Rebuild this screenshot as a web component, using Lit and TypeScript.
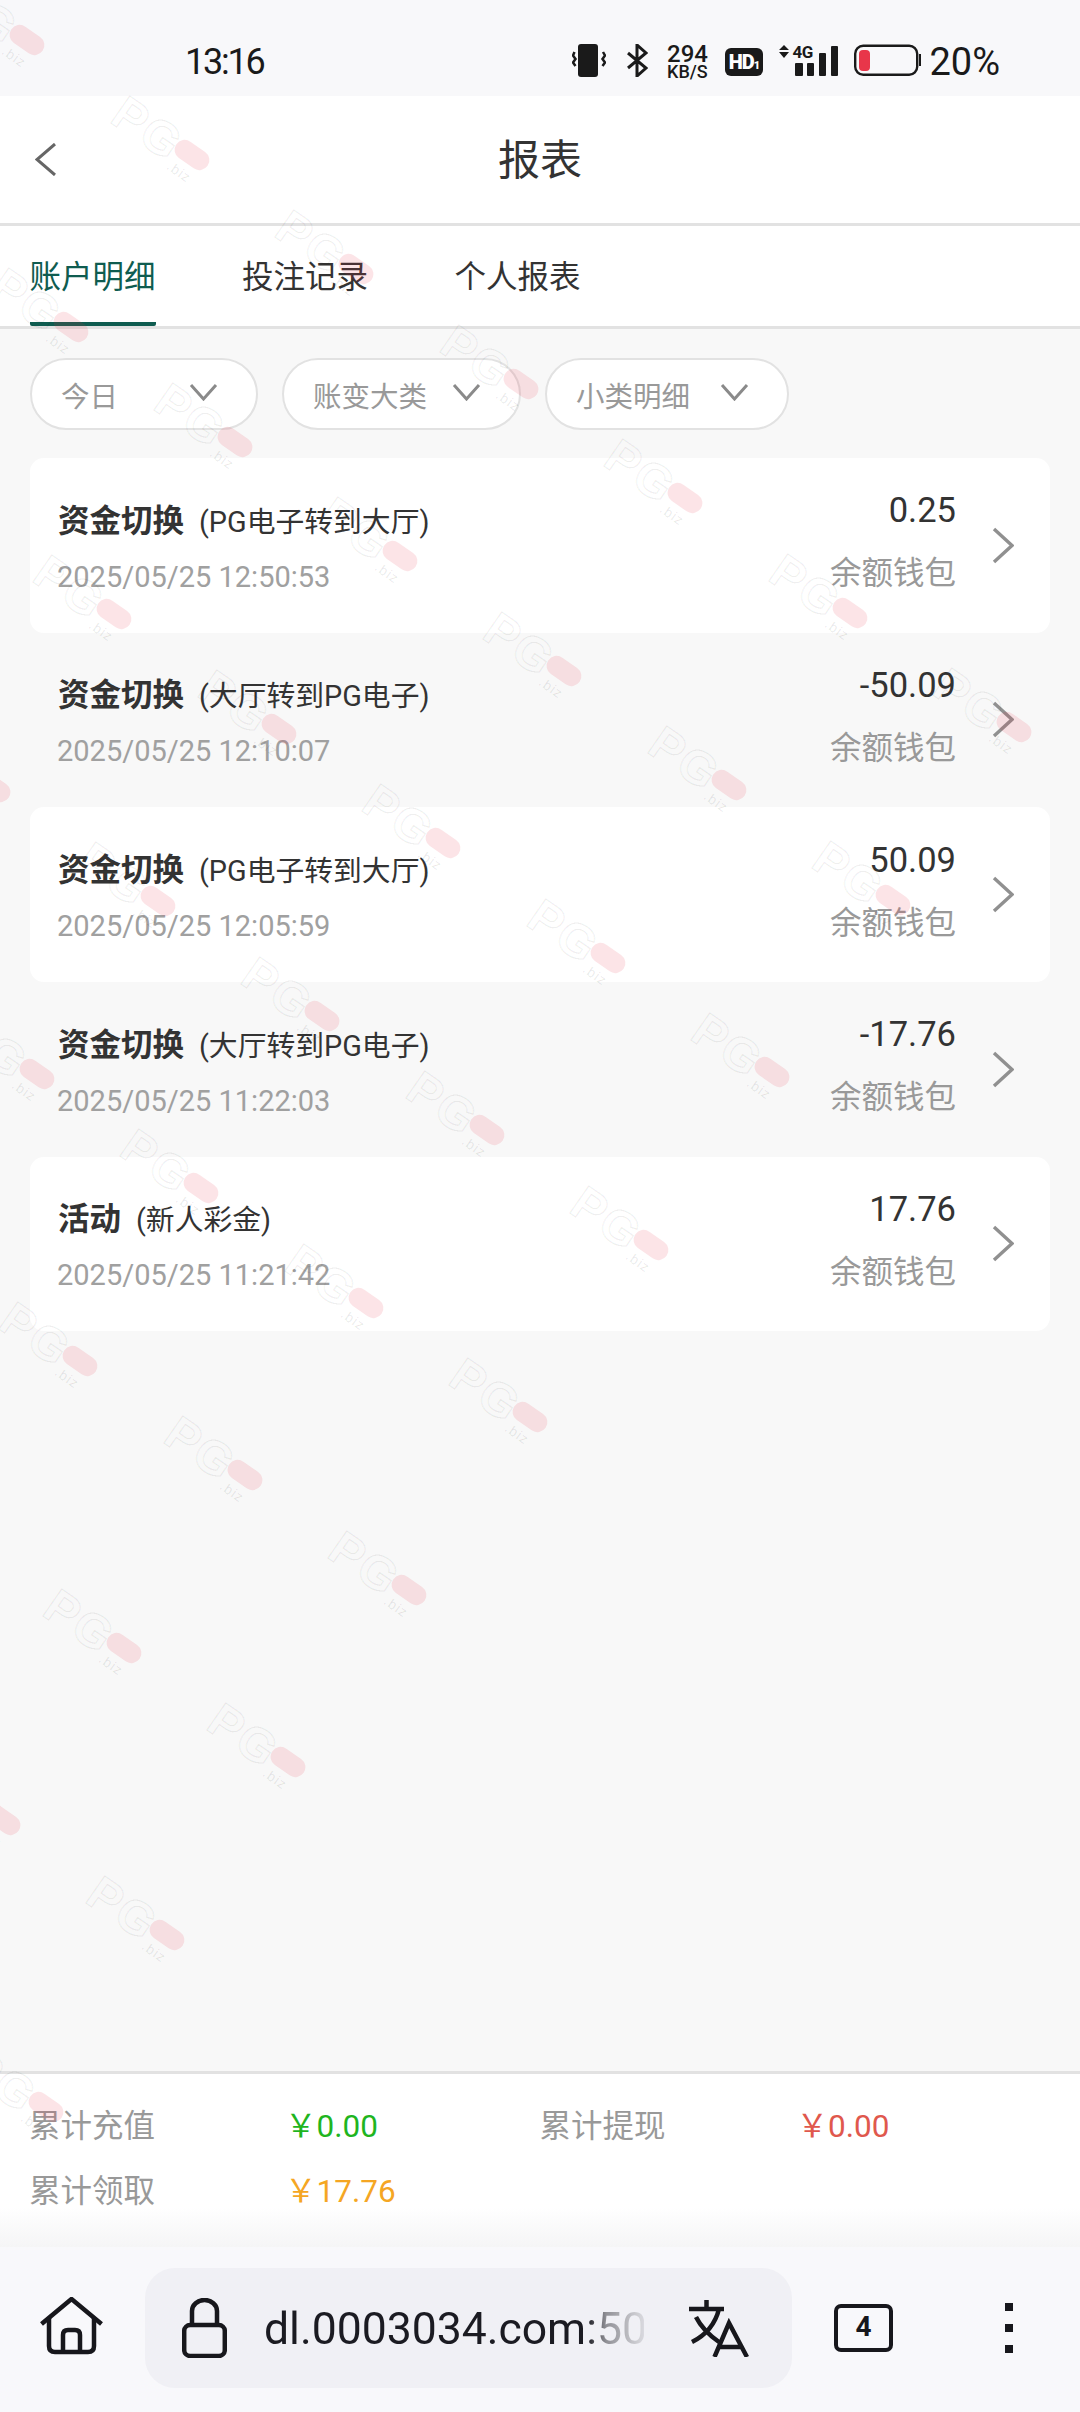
import { LitElement, css, html, svg } from 'lit'
import { customElement } from 'lit/decorators.js'

const records = [
  { title: '资金切换', sub: '(PG电子转到大厅)', time: '2025/05/25 12:50:53', amount: '0.25', card: true },
  { title: '资金切换', sub: '(大厅转到PG电子)', time: '2025/05/25 12:10:07', amount: '-50.09', card: false },
  { title: '资金切换', sub: '(PG电子转到大厅)', time: '2025/05/25 12:05:59', amount: '50.09', card: true },
  { title: '资金切换', sub: '(大厅转到PG电子)', time: '2025/05/25 11:22:03', amount: '-17.76', card: false },
  { title: '活动', sub: '(新人彩金)', time: '2025/05/25 11:21:42', amount: '17.76', card: true },
]

// watermark lattice: [row, first column, last column]
const marks: [number, number, number][] = [
  [0, 0, 6], [1, 0, 5], [2, 0, 4], [3, -1, 3], [4, -1, 2], [5, -1, 1], [6, -1, 0], [7, -2, -1], [8, -2, -2],
]
const markPoints = marks.flatMap(([j, from, to]) => {
  const out: { x: number; y: number }[] = []
  for (let i = from; i <= to; i++) out.push({ x: 27 + i * 164.5 + j * 43.5, y: 40 + i * 114.5 + j * 287 })
  return out
})

const chevronDown = svg`<path d="M2 2 L14.5 16 L27 2" fill="none" stroke="#8a8a8a" stroke-width="3"/>`
const chevronRight = svg`<path d="M2 2 L20 18.5 L2 35" fill="none" stroke="#909090" stroke-width="3.4"/>`

@customElement('app-root')
export class AppRoot extends LitElement {
  static styles = css`
    :host {
      display: flex;
      flex-direction: column;
      position: relative;
      width: 1080px;
      height: 2412px;
      overflow: hidden;
      background: #f8f8f8;
      font-family: Roboto, 'Noto Sans CJK SC', sans-serif;
      color: #333;
    }
    svg { display: block; flex: none; }

    .status {
      height: 96px;
      box-sizing: border-box;
      padding: 44px 80px 0 185px;
      display: flex;
      align-items: flex-start;
      background: #f8f8fa;
      color: #1a1a1a;
    }
    .time { font-size: 36px; line-height: 36px; letter-spacing: -2.2px; }
    .icons { margin-left: auto; display: flex; align-items: flex-start; }
    .vib { margin-right: 21px; }
    .bt { margin-right: 18px; }
    .net { width: 42px; margin-right: 17px; text-align: center; font-weight: 500; }
    .net div:first-child { font-size: 24px; line-height: 20px; }
    .net div:last-child { font-size: 18px; line-height: 15px; }
    .hd {
      width: 38px;
      height: 28px;
      margin: 4px 16px 0 0;
      border-radius: 6px;
      background: #1a1a1a;
      color: #fff;
      font-size: 20px;
      font-weight: 900;
      line-height: 28px;
      letter-spacing: -1px;
      text-align: center;
    }
    .hd small { font-size: 11px; letter-spacing: 0; }
    .signal { position: relative; width: 59px; height: 33px; margin-right: 16px; }
    .signal span {
      position: absolute;
      left: 13px;
      top: 0;
      font-size: 17px;
      line-height: 16px;
      font-weight: 700;
      letter-spacing: -0.5px;
    }
    .batt { margin-right: 8px; }
    .pct { font-size: 38px; line-height: 36px; }

    .head {
      height: 127px;
      box-sizing: content-box;
      display: flex;
      align-items: center;
      justify-content: center;
      position: relative;
      background: #fff;
      border-bottom: 3px solid #e2e2e2;
      font-size: 42px;
      line-height: 60px;
      color: #333;
    }
    .head span { margin-top: 2px; }
    .back { position: absolute; left: 35px; top: 47px; }

    .tabs {
      height: 100px;
      display: flex;
      gap: 86.5px;
      padding: 0 29.5px;
      background: #fff;
      border-bottom: 3px solid #e2e2e2;
      font-size: 31.5px;
    }
    .tab { line-height: 103px; height: 100px; box-sizing: border-box; color: #333; }
    .tab.on { color: #0f5c50; border-bottom: 4px solid #0f5c50; border-radius: 0 0 2px 2px; }

    main { flex: 1; padding: 29px 30px 0; min-height: 0; }
    .filters {
      display: grid;
      grid-template-columns: 228px 239px 244px;
      column-gap: 24px;
      margin-bottom: 28px;
    }
    .pill {
      height: 72px;
      box-sizing: border-box;
      padding: 0 38px 0 29px;
      display: flex;
      align-items: center;
      justify-content: space-between;
      background: #fff;
      border: 2.5px solid #e2e2e2;
      border-radius: 36px;
      font-size: 28.5px;
      color: #999;
    }
    .pill svg { margin-top: -4px; }
    .row {
      height: 174.67px;
      box-sizing: border-box;
      padding: 0 36px 0 28px;
      display: flex;
      align-items: center;
      border-radius: 14px;
    }
    .row.card { background: #fff; }
    .info { flex: 1; padding-top: 8px; }
    .line { display: flex; align-items: center; gap: 15px; line-height: 40px; }
    .name { font-size: 31.5px; font-weight: 700; color: #333; }
    .sub { font-size: 28.8px; color: #333; }
    .date { margin-top: 15px; font-size: 29px; line-height: 40px; color: #a0a0a0; margin-left: -1px; }
    .side { text-align: right; padding-bottom: 6px; margin-right: 36px; }
    .amount { font-size: 34.5px; line-height: 40px; color: #333; }
    .wallet { margin-top: 24px; font-size: 31.5px; line-height: 40px; color: #999; }

    .totals {
      height: 176px;
      box-sizing: border-box;
      padding: 33px 0 0 29px;
      display: grid;
      grid-template-columns: 256px 254.5px 257px 1fr;
      grid-auto-rows: 65px;
      align-content: start;
      border-top: 3px solid #e2e2e2;
      background: linear-gradient(#fff 77%, #f5f5f6 100%);
      font-size: 31.5px;
      line-height: 40px;
      color: #999;
    }
    .val { font-size: 31.5px; }
    .green { color: #1fb51f; }
    .red { color: #e0584d; }
    .amber { color: #f5a623; }

    .bar {
      height: 165px;
      box-sizing: border-box;
      padding-bottom: 3px;
      position: relative;
      display: flex;
      align-items: center;
      background: #f8f8fb;
    }
    .home { margin: -4px 42px 0 40px; }
    .url {
      width: 647px;
      height: 120px;
      box-sizing: border-box;
      padding: 0 42px 0 37px;
      display: flex;
      align-items: center;
      border-radius: 30px;
      background: #f0f0f5;
    }
    .addr {
      width: 380px;
      margin: 2px 45px 0 37px;
      overflow: hidden;
      white-space: nowrap;
      font-size: 44.5px;
      color: #1b1b22;
      -webkit-mask-image: linear-gradient(90deg, #000 85%, rgba(0, 0, 0, 0.45) 90%, rgba(0, 0, 0, 0.1) 100%);
      mask-image: linear-gradient(90deg, #000 85%, rgba(0, 0, 0, 0.45) 90%, rgba(0, 0, 0, 0.1) 100%);
    }
    .count {
      width: 59px;
      height: 48px;
      box-sizing: border-box;
      margin-left: 42px;
      border: 4.5px solid #17171c;
      border-radius: 7px;
      font-size: 28px;
      font-weight: 700;
      line-height: 38px;
      text-align: center;
      color: #17171c;
    }
    .more { margin-left: 112px; display: flex; flex-direction: column; gap: 13px; }
    .more i { display: block; width: 8px; height: 8px; background: #17171c; }

    .wm { position: absolute; width: 0; height: 0; pointer-events: none; transform: rotate(34.8deg); }
    .wm b {
      position: absolute;
      left: -88px;
      top: -20px;
      font-family: 'Liberation Sans', sans-serif;
      font-size: 48px;
      line-height: 48px;
      letter-spacing: 2px;
      color: transparent;
      -webkit-text-stroke: 1.5px rgba(0, 0, 0, 0.06);
    }
    .wm i {
      position: absolute;
      left: -19px;
      top: -10px;
      width: 38px;
      height: 20px;
      border-radius: 10px;
      background: rgba(232, 50, 72, 0.13);
    }
    .wm span {
      position: absolute;
      left: -14px;
      top: 14px;
      font-family: 'Liberation Sans', sans-serif;
      font-size: 14px;
      line-height: 14px;
      letter-spacing: 1px;
      color: rgba(0, 0, 0, 0.09);
    }
  `

  private renderStatus() {
    return html`
      <div class="status">
        <div class="time">13:16</div>
        <div class="icons">
          <svg class="vib" width="34" height="33" viewBox="0 0 34 33">
            <rect x="6" y="0" width="20" height="33" rx="3" fill="#1a1a1a"/>
            <path d="M2.5 8 L1 11.5 L3.5 15 L1 18.5 L3.5 22 M31 8 L33 11.5 L30.5 15 L33 18.5 L30.5 22" fill="none" stroke="#1a1a1a" stroke-width="2.5"/>
          </svg>
          <svg class="bt" width="21" height="33" viewBox="0 0 21 33">
            <path d="M1 9 L19 24 L10 32 V1 L19 9 L1 24" fill="none" stroke="#1a1a1a" stroke-width="3"/>
          </svg>
          <div class="net"><div>294</div><div>KB/S</div></div>
          <div class="hd">HD<small>1</small></div>
          <div class="signal">
            <svg width="59" height="33" viewBox="0 0 59 33">
              <path d="M5 1 L10 6 H0 Z M5 14 L10 8 H0 Z" fill="#1a1a1a"/>
              <rect x="16" y="19" width="8" height="13" rx="1" fill="#1a1a1a"/>
              <rect x="28" y="19" width="7" height="13" rx="1" fill="#1a1a1a"/>
              <rect x="40" y="9" width="7" height="23" rx="1" fill="#1a1a1a"/>
              <rect x="52" y="2" width="7" height="30" rx="1" fill="#1a1a1a"/>
            </svg>
            <span>4G</span>
          </div>
          <svg class="batt" width="67" height="33" viewBox="0 0 67 33">
            <rect x="1.2" y="1.7" width="62" height="29" rx="8" fill="none" stroke="#1a1a1a" stroke-width="2.4"/>
            <rect x="5" y="6" width="11" height="21" rx="4" fill="#e8364a"/>
            <rect x="65" y="10" width="2" height="12" fill="#1a1a1a"/>
          </svg>
          <div class="pct">20%</div>
        </div>
      </div>
    `
  }

  private renderBar() {
    return html`
      <div class="bar">
        <svg class="home" width="63" height="58" viewBox="0 0 63 58">
          <path d="M1.5 27 L31.5 2 L61.5 27" fill="none" stroke="#17171c" stroke-width="4.5"/>
          <path d="M9 21 V49 Q9 55 15 55 H48 Q54 55 54 49 V21" fill="none" stroke="#17171c" stroke-width="4.5"/>
          <path d="M23 55 V38 Q23 33 28 33 H35 Q40 33 40 38 V55" fill="none" stroke="#17171c" stroke-width="4.5"/>
        </svg>
        <div class="url">
          <svg width="45" height="60" viewBox="0 0 45 60">
            <rect x="2.2" y="27" width="40.6" height="31" rx="6" fill="none" stroke="#17171c" stroke-width="4.5"/>
            <path d="M10 27 V13 A12.5 11 0 0 1 35 13 V27" fill="none" stroke="#17171c" stroke-width="4.5"/>
          </svg>
          <div class="addr">dl.0003034.com:5000</div>
          <svg width="60" height="58" viewBox="30 10 60 58">
            <path d="M30 20 H65 M47.5 11 V20 M60 20 C56 36 47 46 33 53 M37 28 C42 38 50 46 60 53" fill="none" stroke="#17171c" stroke-width="4.5"/>
            <path d="M55.5 68 L70 34 L88 68 M60 58 H83" fill="none" stroke="#17171c" stroke-width="4.5"/>
          </svg>
        </div>
        <div class="count">4</div>
        <div class="more"><i></i><i></i><i></i></div>
      </div>
    `
  }

  render() {
    return html`
      ${this.renderStatus()}
      <div class="head">
        <svg class="back" width="22" height="33" viewBox="0 0 22 33">
          <path d="M20 1 L2 16.5 L20 32" fill="none" stroke="#666" stroke-width="3"/>
        </svg>
        <span>报表</span>
      </div>
      <div class="tabs">
        <div class="tab on">账户明细</div>
        <div class="tab">投注记录</div>
        <div class="tab">个人报表</div>
      </div>
      <main>
        <div class="filters">
          ${['今日', '账变大类', '小类明细'].map(
            (f) => html`<div class="pill">${f}<svg width="29" height="18" viewBox="0 0 29 18">${chevronDown}</svg></div>`
          )}
        </div>
        ${records.map(
          (r) => html`
            <div class="row ${r.card ? 'card' : ''}">
              <div class="info">
                <div class="line"><span class="name">${r.title}</span><span class="sub">${r.sub}</span></div>
                <div class="date">${r.time}</div>
              </div>
              <div class="side">
                <div class="amount">${r.amount}</div>
                <div class="wallet">余额钱包</div>
              </div>
              <svg width="22" height="37" viewBox="0 0 22 37">${chevronRight}</svg>
            </div>
          `
        )}
      </main>
      <div class="totals">
        <div>累计充值</div><div class="val green">￥0.00</div>
        <div>累计提现</div><div class="val red">￥0.00</div>
        <div>累计领取</div><div class="val amber">￥17.76</div>
      </div>
      ${this.renderBar()}
      ${markPoints.map(
        (p) => html`<div class="wm" style="left:${p.x}px;top:${p.y}px"><b>PG</b><i></i><span>.biz</span></div>`
      )}
    `
  }
}
